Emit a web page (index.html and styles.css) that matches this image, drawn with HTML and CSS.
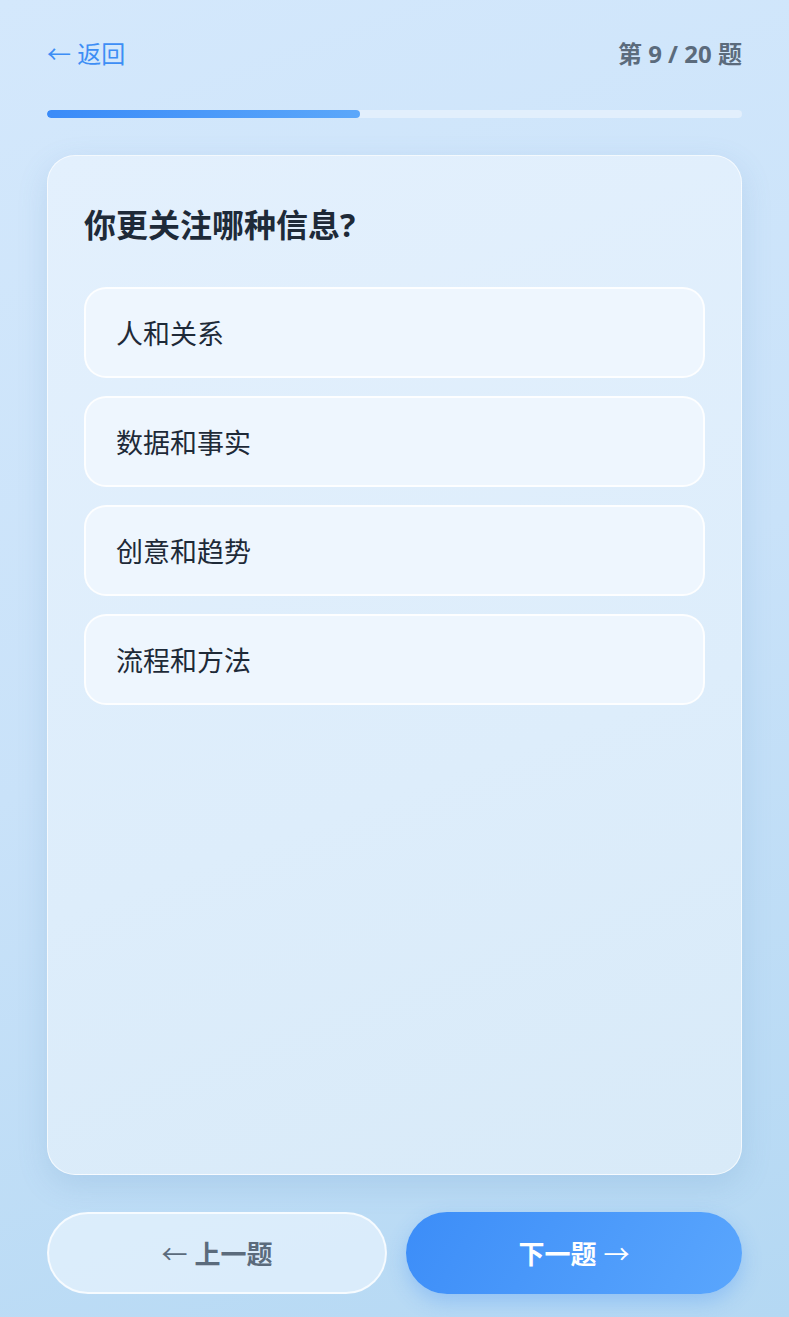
FILE: index.html
```html
<!DOCTYPE html>
<html lang="zh-CN">
<head>
    <meta charset="UTF-8">
    <meta name="viewport" content="width=device-width, initial-scale=1.0">
    <title>测试</title>
    <link rel="stylesheet" href="styles.css">
</head>
<body>
<div class="page">
    <div class="top-bar">
        <a class="back-link" href="#"><span class="arrow">←</span> 返回</a>
        <div class="counter">第 9 / 20 题</div>
    </div>
    <div class="progress"><div class="progress-fill" style="width: 45%"></div></div>

    <div class="card">
        <h2 class="question">你更关注哪种信息?</h2>
        <div class="options">
            <button class="option">人和关系</button>
            <button class="option">数据和事实</button>
            <button class="option">创意和趋势</button>
            <button class="option">流程和方法</button>
        </div>
    </div>

    <div class="nav">
        <button class="nav-btn prev"><span class="arrow">←</span> 上一题</button>
        <button class="nav-btn next">下一题 <span class="arrow">→</span></button>
    </div>
</div>
</body>
</html>
```

FILE: styles.css
```css
html, body {
    margin: 0;
    height: 100%;
}
body {
    font-family: 'Noto Sans', 'Noto Sans CJK SC', sans-serif;
    background: linear-gradient(160deg, #d4e8fc 0%, #c9e2f9 50%, #b4d8f3 100%);
    color: #1e2a38;
}
.page {
    box-sizing: border-box;
    min-height: 100vh;
    padding: 30px 47px 23px;
    display: flex;
    flex-direction: column;
}
.top-bar {
    height: 44px;
    display: flex;
    align-items: center;
    justify-content: space-between;
}
.back-link {
    color: #3d8ef5;
    text-decoration: none;
    font-size: 24px;
}
.arrow {
    font-family: 'Noto Sans CJK SC', sans-serif;
    font-weight: normal;
}
.counter {
    font-size: 24px;
    font-weight: bold;
    color: #5b6b7c;
}
.progress {
    margin-top: 36px;
    height: 8px;
    border-radius: 4px;
    background: #e2effc;
    overflow: hidden;
}
.progress-fill {
    height: 100%;
    border-radius: 4px;
    background: linear-gradient(90deg, #3a8bf8, #5ba7fa);
}
.card {
    flex: 1;
    margin-top: 37px;
    padding: 47px 36px;
    border-radius: 28px;
    background: linear-gradient(160deg, #e3f0fd 0%, #ddedfb 60%, #d8eaf8 100%);
    border: 1px solid rgba(255, 255, 255, 0.7);
    box-shadow: 0 10px 30px rgba(90, 140, 190, 0.18);
}
.question {
    margin: 0;
    font-size: 32px;
    line-height: 44px;
    font-weight: bold;
    color: #1e2a38;
}
.options {
    margin-top: 40px;
    display: flex;
    flex-direction: column;
    gap: 18px;
}
.option {
    height: 91px;
    padding: 0 30px;
    text-align: left;
    font-family: inherit;
    font-size: 27px;
    color: #1e2a38;
    background: #eef6fe;
    border: 2px solid rgba(255, 255, 255, 0.85);
    border-radius: 22px;
    cursor: pointer;
}
.nav {
    margin-top: 37px;
    display: flex;
    gap: 19px;
}
.nav-btn {
    flex: 1;
    height: 82px;
    border-radius: 41px;
    font-family: inherit;
    font-size: 26px;
    font-weight: bold;
    cursor: pointer;
}
.prev {
    background: rgba(232, 243, 253, 0.7);
    border: 2px solid rgba(255, 255, 255, 0.75);
    color: #5b6b7c;
}
.next {
    border: none;
    color: #fff;
    background: linear-gradient(120deg, #3c8df8, #5aa6fd);
    box-shadow: 0 8px 20px rgba(60, 140, 245, 0.3);
}
```
